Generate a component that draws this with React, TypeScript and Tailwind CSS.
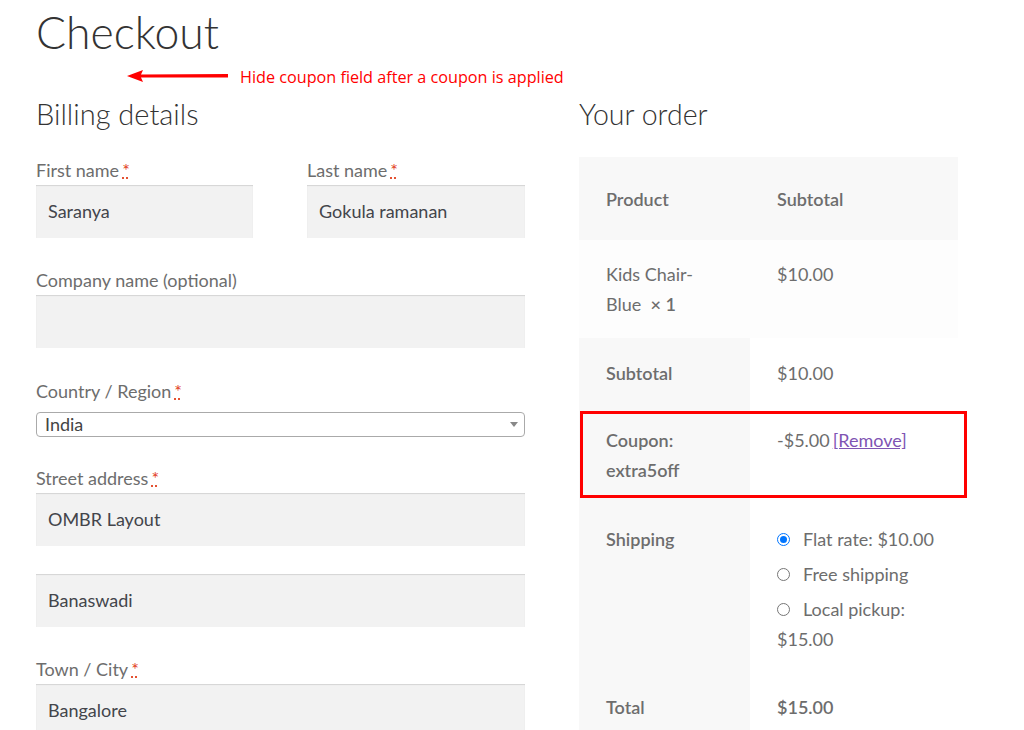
import React from "react";

const Req = () => (
  <abbr
    title="required"
    className="ml-[3px] text-[#e2401c] no-underline [text-decoration:underline_dotted] [text-decoration-color:#e2401c]"
  >
    *
  </abbr>
);

const Label = ({ children, req }: { children: React.ReactNode; req?: boolean }) => (
  <label className="block h-[30px] leading-[30px] text-[18px] text-[#6d6d6d]">
    {children}
    {req && <Req />}
  </label>
);

const Input = ({ value }: { value?: string }) => (
  <div className="h-[53px] bg-[#f2f2f2] shadow-[inset_0_1px_1px_rgba(0,0,0,0.125)] px-[12px] flex items-center text-[18px] text-[#43454b]">
    {value}
  </div>
);

const Radio = ({ checked }: { checked?: boolean }) => (
  <span
    className={
      checked
        ? "inline-block w-[13px] h-[13px] rounded-full border-[1px] border-[#0075ff] bg-white relative shrink-0"
        : "inline-block w-[13px] h-[13px] rounded-full border-[1px] border-[#767676] bg-white shrink-0"
    }
  >
    {checked && <span className="absolute left-[2px] top-[2px] w-[7px] h-[7px] rounded-full bg-[#0075ff]" />}
  </span>
);

export default function App() {
  return (
    <div
      className="relative w-[1024px] h-[730px] overflow-hidden bg-white text-[#6d6d6d]"
      style={{ fontFamily: "Lato, 'Noto Sans', sans-serif" }}
    >
      <div className="pl-[36px]">
        <h1 className="text-[44.5px] font-light text-[#333] leading-[56px] pt-[4px] h-[60px]">Checkout</h1>
        <div className="h-[32px]" />
        <div className="flex gap-[54px]">
          {/* Billing */}
          <div className="w-[489px]">
            <h3 className="text-[29px] font-light text-[#333] leading-[40px] pt-[2px] h-[63px]">Billing details</h3>
            <div className="flex justify-between">
              <div className="w-[217px]">
                <Label req>First name</Label>
                <Input value="Saranya" />
              </div>
              <div className="w-[218px]">
                <Label req>Last name</Label>
                <Input value="Gokula ramanan" />
              </div>
            </div>
            <div className="mt-[27px]">
              <Label>Company name (optional)</Label>
              <Input />
            </div>
            <div className="mt-[28px]">
              <Label req>Country / Region</Label>
              <div className="mt-[6px] h-[25px] rounded-[4px] border border-[#aaa] bg-white flex items-center justify-between pl-[8px] pr-[6px] text-[18px] text-[#444]">
                <span>India</span>
                <span className="w-0 h-0 border-l-[4px] border-r-[4px] border-t-[5px] border-l-transparent border-r-transparent border-t-[#888]" />
              </div>
            </div>
            <div className="mt-[26px]">
              <Label req>Street address</Label>
              <Input value="OMBR Layout" />
              <div className="mt-[28px]">
                <Input value="Banaswadi" />
              </div>
            </div>
            <div className="mt-[27px]">
              <Label req>Town / City</Label>
              <Input value="Bangalore" />
            </div>
          </div>

          {/* Order */}
          <div className="w-[379px]">
            <h3 className="text-[28.5px] font-light text-[#333] leading-[40px] pt-[2px] h-[65px]">Your order</h3>
            <div className="text-[18px] leading-[30px]">
              <div className="flex bg-[#f8f8f8] font-semibold h-[83px] items-center">
                <div className="w-[171px] pl-[27px]">Product</div>
                <div className="pl-[27px]">Subtotal</div>
              </div>
              <div className="flex bg-[#fdfdfd] h-[98px] py-[19px]">
                <div className="w-[171px] pl-[27px]">
                  Kids Chair-
                  <br />
                  Blue&nbsp; <strong className="font-semibold">× 1</strong>
                </div>
                <div className="pl-[27px]">$10.00</div>
              </div>
              <div className="flex h-[69px]">
                <div className="w-[171px] pl-[27px] bg-[#f8f8f8] font-semibold py-[20px]">Subtotal</div>
                <div className="flex-1 pl-[27px] py-[20px]">$10.00</div>
              </div>
              <div className="flex h-[99px]">
                <div className="w-[171px] pl-[27px] bg-[#f8f8f8] font-semibold py-[18px]">
                  Coupon:
                  <br />
                  extra5off
                </div>
                <div className="flex-1 pl-[27px] py-[18px]">
                  -$5.00
                  <a href="#" className="ml-[3px] text-[#7f54b3] underline">
                    [Remove]
                  </a>
                </div>
              </div>
              <div className="flex h-[168px]">
                <div className="w-[171px] pl-[27px] bg-[#f8f8f8] font-semibold py-[18px]">Shipping</div>
                <div className="flex-1 pl-[27px] py-[18px]">
                  <div className="flex items-center gap-[13px] h-[30px]">
                    <Radio checked />
                    <span>Flat rate: $10.00</span>
                  </div>
                  <div className="flex items-center gap-[13px] h-[30px] mt-[5px]">
                    <Radio />
                    <span>Free shipping</span>
                  </div>
                  <div className="flex items-center gap-[13px] h-[30px] mt-[5px]">
                    <Radio />
                    <span>Local pickup:</span>
                  </div>
                  <div>$15.00</div>
                </div>
              </div>
              <div className="flex h-[60px]">
                <div className="w-[171px] pl-[27px] bg-[#f8f8f8] font-semibold pt-[18px]">Total</div>
                <div className="flex-1 pl-[27px] pt-[18px] font-semibold">$15.00</div>
              </div>
            </div>
          </div>
        </div>
      </div>

      {/* Annotation overlay */}
      <div className="absolute left-[127px] top-[69px] flex items-center">
        <svg width="102" height="14" viewBox="0 0 102 14">
          <polygon points="0,7 16,1 14,5.5 101,5 101,8.5 14,8.5 16,13" fill="#ff0000" />
        </svg>
      </div>
      <div
        className="absolute left-[240px] top-[66px] text-[16.2px] leading-[22px] text-[#ff0000]"
        style={{ fontFamily: "'Open Sans', sans-serif" }}
      >
        Hide coupon field after a coupon is applied
      </div>
      <div className="absolute left-[580px] top-[411px] w-[387px] h-[87px] border-[3px] border-[#ff0000]" />
    </div>
  );
}
